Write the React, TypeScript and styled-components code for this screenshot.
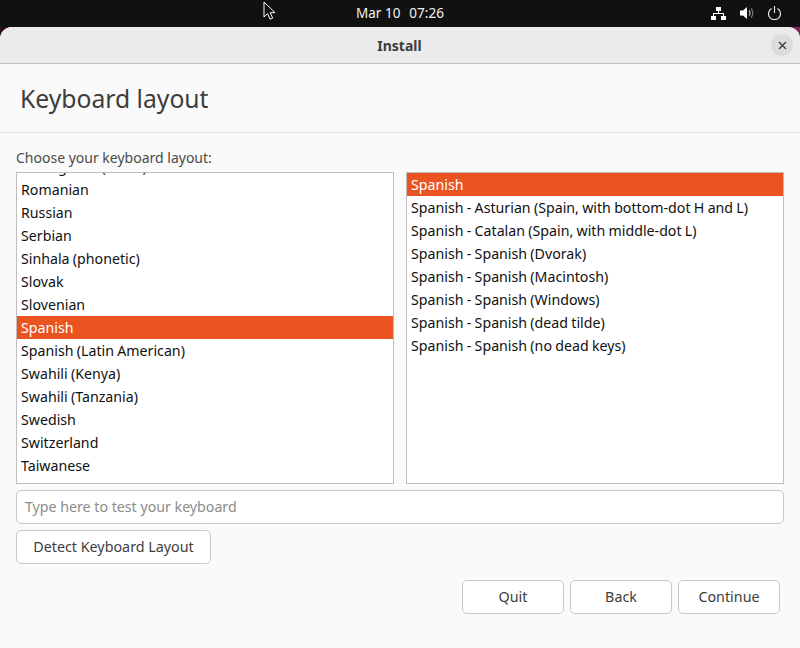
import styled, { createGlobalStyle } from "styled-components";

const GlobalStyle = createGlobalStyle`
  html, body {
    margin: 0;
    padding: 0;
    width: 800px;
    height: 648px;
    overflow: hidden;
    background: #111;
    font-family: "Noto Sans", "Open Sans", sans-serif;
  }
  * { box-sizing: border-box; }
`;

const leftRows = [
  "Portuguese (Brazil)",
  "Romanian",
  "Russian",
  "Serbian",
  "Sinhala (phonetic)",
  "Slovak",
  "Slovenian",
  "Spanish",
  "Spanish (Latin American)",
  "Swahili (Kenya)",
  "Swahili (Tanzania)",
  "Swedish",
  "Switzerland",
  "Taiwanese",
  "Tajik",
];

const rightRows = [
  "Spanish",
  "Spanish - Asturian (Spain, with bottom-dot H and L)",
  "Spanish - Catalan (Spain, with middle-dot L)",
  "Spanish - Spanish (Dvorak)",
  "Spanish - Spanish (Macintosh)",
  "Spanish - Spanish (Windows)",
  "Spanish - Spanish (dead tilde)",
  "Spanish - Spanish (no dead keys)",
];

const App = () => {
  return (
    <Desktop>
      <GlobalStyle />
      <TopBar>
        <Clock>
          <span>Mar 10</span>
          <span>07:26</span>
        </Clock>
        <Tray>
          <svg width="15" height="13" viewBox="0 0 15 13" fill="#fff">
            <rect x="5" y="0" width="5" height="4" />
            <rect x="0" y="9" width="5" height="4" />
            <rect x="10" y="9" width="5" height="4" />
            <path d="M7 4h1v2h5v3h-1V7H3v2H2V6h5z" />
          </svg>
          <svg width="14" height="14" viewBox="0 0 14 14" fill="none">
            <path d="M0 4.5h3L7 1v12L3 9.5H0z" fill="#fff" />
            <path d="M9 4.5a3.5 3.5 0 0 1 0 5" stroke="#bbb" strokeWidth="1.2" />
            <path d="M11 2.5a6.5 6.5 0 0 1 0 9" stroke="#777" strokeWidth="1.2" />
          </svg>
          <svg width="13" height="14" viewBox="0 0 13 14" fill="none" stroke="#eee" strokeWidth="1.1">
            <path d="M3.6 2.4a6 6 0 1 0 5.8 0" />
            <path d="M6.5 0v7" />
          </svg>
        </Tray>
      </TopBar>
      <Window>
        <TitleBar>
          Install
          <CloseButton>
            <svg width="9" height="9" viewBox="0 0 9 9" stroke="#3d3d3d" strokeWidth="1.4">
              <path d="M1 1l7 7M8 1l-7 7" />
            </svg>
          </CloseButton>
        </TitleBar>
        <Header>
          <h1>Keyboard layout</h1>
        </Header>
        <Content>
          <Label>Choose your keyboard layout:</Label>
          <Lists>
            <ListBox>
              <ScrolledRows>
                {leftRows.map((row) => (
                  <Row key={row} $selected={row === "Spanish"}>
                    {row}
                  </Row>
                ))}
              </ScrolledRows>
            </ListBox>
            <ListBox>
              {rightRows.map((row) => (
                <Row key={row} $selected={row === "Spanish"}>
                  {row}
                </Row>
              ))}
            </ListBox>
          </Lists>
          <TestInput placeholder="Type here to test your keyboard" readOnly />
          <DetectButton>Detect Keyboard Layout</DetectButton>
          <Footer>
            <NavButton>Quit</NavButton>
            <NavButton>Back</NavButton>
            <NavButton>Continue</NavButton>
          </Footer>
        </Content>
      </Window>
      <Pointer width="14" height="20" viewBox="0 0 14 20">
        <path d="M1 1v15l3.6-3.4 2.5 5.6 2.6-1.1-2.5-5.4H12z" fill="#111" stroke="#fff" strokeWidth="1" />
      </Pointer>
    </Desktop>
  );
};

const Desktop = styled.div`
  position: relative;
  width: 800px;
  height: 648px;
  overflow: hidden;
  display: flex;
  flex-direction: column;
  background: linear-gradient(to right, #2c0a20, #7a2855);
`;

const TopBar = styled.div`
  height: 27px;
  flex: none;
  background: #111111;
  color: #f2f2f2;
  position: relative;
  display: flex;
  align-items: center;
  justify-content: flex-end;
  padding: 0 19px 1px 0;
`;

const Clock = styled.div`
  position: absolute;
  left: 356px;
  top: 4px;
  display: flex;
  gap: 9px;
  font-size: 13.5px;
  line-height: 18px;
`;

const Tray = styled.div`
  display: flex;
  align-items: center;
  gap: 14px;
`;

const Pointer = styled.svg`
  position: absolute;
  left: 263px;
  top: 1px;
`;

const Window = styled.div`
  flex: 1;
  display: flex;
  flex-direction: column;
  background: #fafafa;
  border-radius: 12px 12px 0 0;
  overflow: hidden;
`;

const TitleBar = styled.div`
  height: 37px;
  flex: none;
  position: relative;
  display: flex;
  align-items: center;
  justify-content: center;
  padding-right: 1px;
  background: #ebebeb;
  border-bottom: 1px solid #bfbfbf;
  color: #3d3d3d;
  font-size: 14px;
  font-weight: 700;
`;

const CloseButton = styled.span`
  position: absolute;
  right: 7px;
  top: 7px;
  width: 22px;
  height: 22px;
  border-radius: 50%;
  background: #dcdcdc;
  display: flex;
  align-items: center;
  justify-content: center;
`;

const Header = styled.div`
  height: 69px;
  flex: none;
  display: flex;
  align-items: center;
  padding: 0 20px;
  border-bottom: 1px solid #e3e3e3;
  h1 {
    margin: 0;
    font-size: 24.7px;
    font-weight: 400;
    color: #3d3d3d;
  }
`;

const Content = styled.div`
  flex: 1;
  display: flex;
  flex-direction: column;
  padding: 15px 16px 0;
`;

const Label = styled.div`
  height: 24px;
  font-size: 14px;
  line-height: 20px;
  color: #4a4a4a;
`;

const Lists = styled.div`
  display: grid;
  grid-template-columns: 378px 378px;
  gap: 12px;
`;

const ListBox = styled.div`
  height: 312px;
  background: #fff;
  border: 1px solid #bfbfbf;
  overflow: hidden;
`;

const ScrolledRows = styled.div`
  margin-top: -18px;
`;

const Row = styled.div<{ $selected?: boolean }>`
  height: 23px;
  padding: 0 4px;
  font-size: 14.2px;
  word-spacing: -0.4px;
  line-height: 23px;
  white-space: nowrap;
  color: ${({ $selected }) => ($selected ? "#ffffff" : "#111111")};
  background: ${({ $selected }) => ($selected ? "#e95420" : "transparent")};
`;

const TestInput = styled.input`
  height: 34px;
  margin-top: 6px;
  padding: 0 8px 2px;
  border: 1px solid #c8c8c8;
  border-radius: 5px;
  background: #fff;
  font-family: inherit;
  font-size: 14.2px;
  outline: none;
  &::placeholder {
    color: #8c8c8c;
    opacity: 1;
  }
`;

const ButtonBase = styled.button`
  height: 34px;
  padding: 0 0 2px;
  border: 1px solid #c8c8c8;
  border-radius: 5px;
  background: #fff;
  color: #3d3d3d;
  font-family: inherit;
  font-size: 14.3px;
`;

const DetectButton = styled(ButtonBase)`
  width: 195px;
  margin-top: 6px;
`;

const Footer = styled.div`
  display: flex;
  justify-content: flex-end;
  gap: 6px;
  margin-top: 16px;
  padding-right: 4px;
`;

const NavButton = styled(ButtonBase)`
  width: 102px;
`;

export default App;
